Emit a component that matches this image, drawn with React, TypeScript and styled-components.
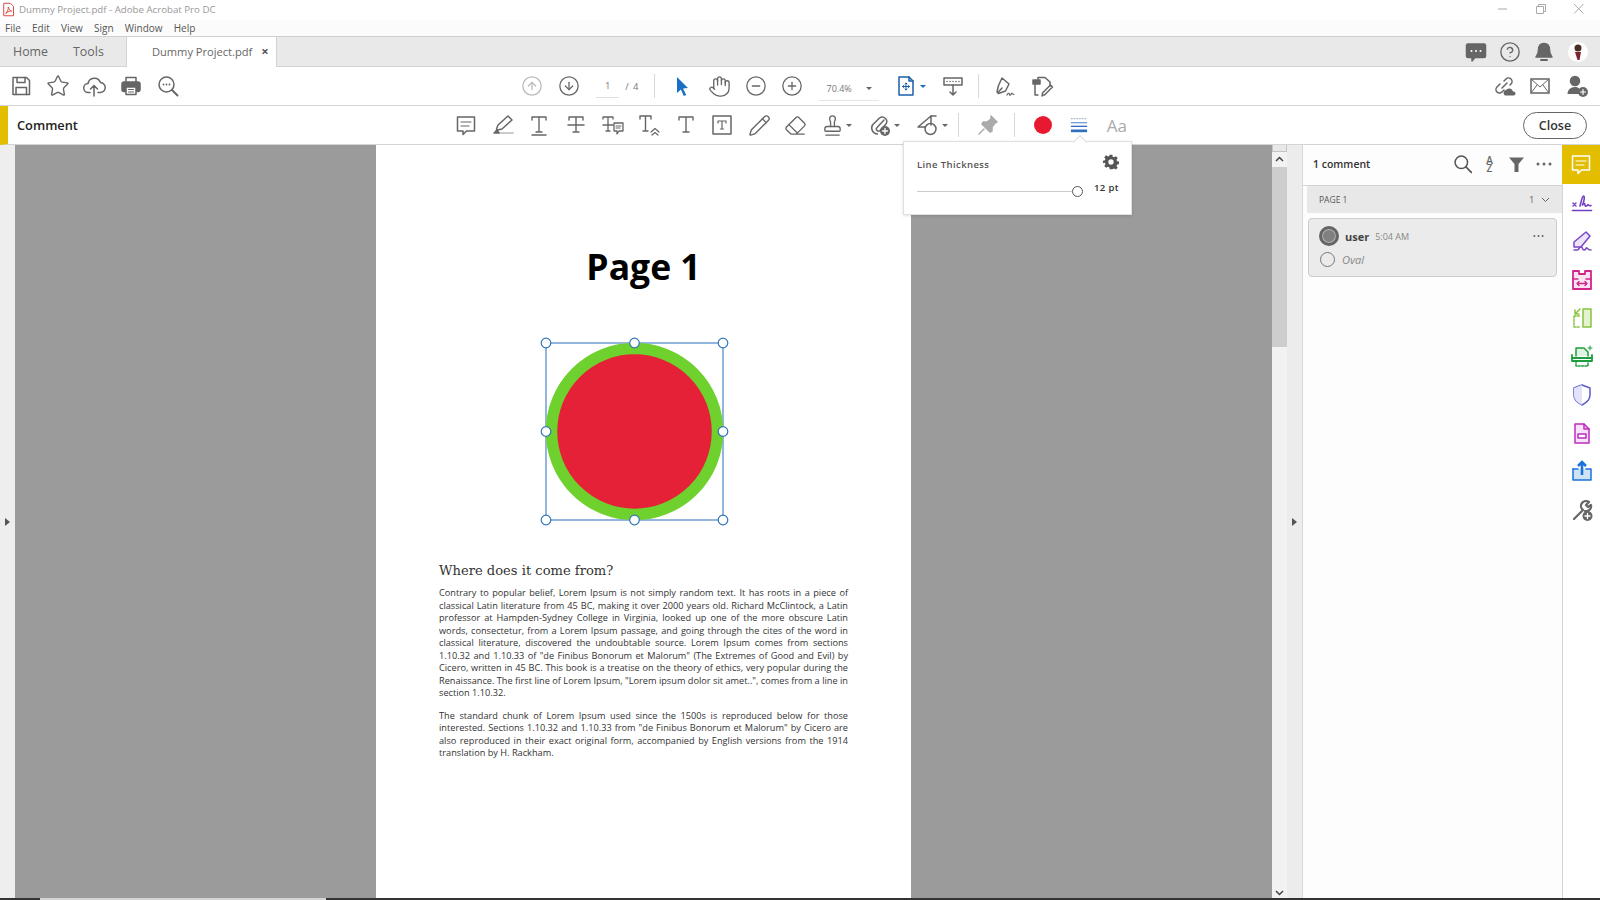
import React from 'react';
import styled, { createGlobalStyle } from 'styled-components';
import {
  CircleArrowDown,
  CircleArrowUp,
  CircleHelp,
  CircleMinus,
  CirclePlus,
  Eraser,
  Hand,
  Pencil,
  Star,
  Stamp,
} from 'lucide-react';

const GlobalStyle = createGlobalStyle`
  html, body, #root {
    margin: 0;
    padding: 0;
    width: 100%;
    height: 100%;
    overflow: hidden;
  }
  body {
    font-family: "Open Sans", "Liberation Sans", sans-serif;
    background: #fff;
  }
`;

// App frame
const Frame = styled.div`
  width: 1600px;
  height: 900px;
  display: flex;
  flex-direction: column;
  position: relative;
  overflow: hidden;
`;

const TitleBar = styled.div`
  height: 20px;
  flex: none;
  display: flex;
  align-items: center;
  padding: 0 0 2px 1px;
  gap: 3px;
  box-sizing: border-box;
  background: #fff;
  font-size: 9.7px;
  color: #999;
`;

const TitleText = styled.span`
  flex: 1;
`;

const WindowControls = styled.div`
  display: flex;
  align-items: center;
  margin-right: 15px;
  gap: 26px;
  color: #aaa;
`;

const MenuBar = styled.div`
  height: 16px;
  flex: none;
  display: flex;
  align-items: center;
  padding-left: 5px;
  gap: 11.2px;
  background: #fbfbfb;
  font-size: 10px;
  color: #555;
`;

const TabBar = styled.div`
  height: 31px;
  flex: none;
  display: flex;
  background: #e9e9e9;
  border-top: 1px solid #cfcfcf;
  border-bottom: 1px solid #d4d4d4;
  box-sizing: border-box;
  color: #666;
`;

const HomeTabs = styled.div`
  width: 127px;
  display: flex;
  align-items: center;
  padding-left: 13px;
  gap: 25px;
  box-sizing: border-box;
  font-size: 12.4px;
  border-right: 1px solid #d4d4d4;
`;

const DocTab = styled.div`
  width: 150px;
  height: 30px;
  display: flex;
  align-items: center;
  padding: 0 0 2px 25px;
  gap: 9px;
  box-sizing: border-box;
  background: #fff;
  font-size: 11.1px;
  white-space: nowrap;
  border-right: 1px solid #d4d4d4;
`;

const TabClose = styled.span`
  font-size: 13px;
  font-weight: 700;
  color: #555;
`;

const TabActions = styled.div`
  margin-left: auto;
  padding-right: 12px;
  display: flex;
  align-items: center;
  gap: 10px;
  color: #666;
`;

const Avatar = styled.div`
  width: 20px;
  height: 20px;
  border-radius: 50%;
  background: #fff;
  display: flex;
  align-items: center;
  justify-content: center;
  margin-left: 2px;
`;

const Toolbar = styled.div`
  height: 38px;
  flex: none;
  display: flex;
  align-items: center;
  padding-left: 3px;
  border-bottom: 1px solid #d4d4d4;
  background: #fff;
  color: #666;
`;

const Slot = styled.div<{ $w?: number; $ml?: number }>`
  width: ${p => p.$w ?? 36.6}px;
  margin-left: ${p => p.$ml ?? 0}px;
  flex: none;
  display: flex;
  align-items: center;
  justify-content: center;
`;

const PageBox = styled.div`
  width: 67px;
  display: flex;
  align-items: center;
  font-size: 9.5px;
  color: #777;
`;

const PageInput = styled.span`
  width: 23px;
  margin: 5px 6px 0 9px;
  padding-bottom: 5px;
  text-align: center;
  border-bottom: 1px solid #e0e0e0;
`;

const PageTotal = styled.span`
  word-spacing: 2px;
`;

const Divider = styled.div<{ $ml?: number; $mr?: number }>`
  width: 1px;
  height: 24px;
  flex: none;
  background: #d8d8d8;
  margin-left: ${p => p.$ml ?? 0}px;
  margin-right: ${p => p.$mr ?? 0}px;
`;

const ZoomBox = styled.div`
  width: 60px;
  margin: 5px 0 0 8px;
  padding: 5px 7px 5px 8px;
  display: flex;
  align-items: center;
  justify-content: space-between;
  box-sizing: border-box;
  font-size: 9px;
  color: #777;
  border-bottom: 1px solid #e6e6e6;
`;

const Caret = styled.i<{ $color?: string }>`
  width: 0;
  height: 0;
  flex: none;
  border-left: 3px solid transparent;
  border-right: 3px solid transparent;
  border-top: 3.5px solid ${p => p.$color ?? '#666'};
  margin-left: 2px;
`;

const RightTools = styled.div`
  margin-left: auto;
  margin-right: 5px;
  display: flex;
  align-items: center;
`;

const CommentBar = styled.div`
  height: 39px;
  flex: none;
  display: flex;
  align-items: center;
  box-sizing: border-box;
  border-left: 8px solid #e3bd00;
  border-bottom: 1px solid #d4d4d4;
  color: #666;
`;

const CommentLabel = styled.div`
  width: 440px;
  flex: none;
  padding-left: 9px;
  box-sizing: border-box;
  font-size: 12.8px;
  font-weight: 600;
  color: #222;
`;

const Swatch = styled.div`
  width: 18px;
  height: 18px;
  border-radius: 50%;
  background: #e8192f;
`;

const FontGlyph = styled.span`
  font-size: 17px;
  color: #aaa;
`;

const CloseButton = styled.button`
  margin-left: auto;
  margin-right: 13px;
  width: 64px;
  height: 27px;
  border: 1px solid #666;
  border-radius: 14px;
  background: #fff;
  font-family: inherit;
  font-size: 12.5px;
  font-weight: 600;
  color: #333;
`;

// Document area
const Main = styled.div`
  flex: 1;
  min-height: 0;
  display: flex;
`;

const Strip = styled.div<{ $w: number; $bg: string }>`
  width: ${p => p.$w}px;
  flex: none;
  background: ${p => p.$bg};
  display: flex;
  align-items: center;
  justify-content: center;
  box-sizing: border-box;
`;

const Arrow = styled.i`
  width: 0;
  height: 0;
  border-top: 4px solid transparent;
  border-bottom: 4px solid transparent;
  border-left: 5px solid #555;
`;

const Viewer = styled.div`
  width: 1257px;
  flex: none;
  background: #9b9b9b;
  padding-left: 361px;
  box-sizing: border-box;
  overflow: hidden;
`;

const PageSheet = styled.div`
  width: 535px;
  height: 100%;
  background: #fff;
  box-sizing: border-box;
  padding: 98px 63px 0;
`;

const PageTitle = styled.h1`
  margin: 0;
  text-align: center;
  font-size: 35.5px;
  line-height: 46px;
  font-weight: 700;
  color: #000;
`;

const Shape = styled.svg`
  display: block;
  overflow: visible;
  margin: 54px 0 0 107px;
`;

const Heading = styled.h2`
  margin: 41px 0 6px;
  font-family: "DejaVu Serif", "Liberation Serif", serif;
  font-size: 13.1px;
  line-height: 20px;
  font-weight: 400;
  color: #333;
`;

const Para = styled.div`
  margin-bottom: 10px;
  font-size: 9.2px;
  line-height: 12.5px;
  color: #333;
`;

const ParaLine = styled.div<{ $last?: boolean }>`
  text-align: justify;
  text-align-last: ${p => (p.$last ? 'left' : 'justify')};
  white-space: nowrap;
`;

const Scrollbar = styled.div`
  width: 15px;
  flex: none;
  background: #f2f2f2;
  display: flex;
  flex-direction: column;
  align-items: center;
`;

const ScrollCap = styled.div`
  width: 100%;
  height: 7px;
  flex: none;
  box-sizing: border-box;
  background: #e8e8e8;
  border: 1px solid #c4c4c4;
  border-top: 0;
`;

const ScrollArrow = styled.span<{ $h: number }>`
  height: ${p => p.$h}px;
  flex: none;
  display: flex;
  align-items: center;
  color: #555;
`;

const ScrollThumbGap = styled.div`
  height: 2px;
  flex: none;
`;

const ScrollThumb = styled.div`
  width: 100%;
  height: 180px;
  flex: none;
  background: #cdcdcd;
`;

const ScrollSpacer = styled.div`
  flex: 1;
`;

const Panel = styled.div`
  width: 260px;
  flex: none;
  border-left: 1px solid #d8d8d8;
  box-sizing: border-box;
  background: #fdfdfd;
`;

const PanelHeader = styled.div`
  height: 41px;
  display: flex;
  align-items: center;
  padding: 0 5px 2px 10px;
  box-sizing: border-box;
  border-bottom: 1px solid #d4d4d4;
  color: #555;
`;

const PanelTitle = styled.div`
  flex: 1;
  font-size: 10.5px;
  font-weight: 600;
  color: #333;
`;

const PanelTool = styled.div`
  width: 27px;
  display: flex;
  align-items: center;
  justify-content: center;
`;

const AzGlyph = styled.div`
  width: 8px;
  text-align: center;
  font-size: 10px;
  line-height: 8.500px;
  font-weight: 600;
  color: #666;
`;

const PageGroup = styled.div`
  height: 27px;
  margin-left: 4px;
  padding: 0 12px 0 12px;
  display: flex;
  align-items: center;
  justify-content: space-between;
  background: #e8e8e8;
  font-size: 8.5px;
  color: #555;
`;

const PageCount = styled.div`
  display: flex;
  align-items: center;
  gap: 7px;
`;

const CommentCard = styled.div`
  margin: 5px 5px 0 5px;
  height: 59px;
  padding: 5px 12px 0 10px;
  box-sizing: border-box;
  background: #ebebeb;
  border: 1px solid #ccc;
  border-radius: 4px;
`;

const CardRow = styled.div<{ $h: number }>`
  height: ${p => p.$h}px;
  display: flex;
  align-items: center;
  gap: 6px;
`;

const AuthorDot = styled.div`
  width: 20px;
  height: 20px;
  flex: none;
  box-sizing: border-box;
  border-radius: 50%;
  border: 3.5px solid #666;
  background: #808080;
  box-shadow: inset 0 0 0 1px #b8b8b8;
`;

const Author = styled.span`
  font-size: 11px;
  font-weight: 700;
  color: #444;
`;

const CommentTime = styled.span`
  font-size: 9px;
  color: #888;
`;

const CardMore = styled.span`
  margin-left: auto;
  display: flex;
  color: #777;
`;

const TypeRing = styled.div`
  width: 15px;
  height: 15px;
  flex: none;
  box-sizing: border-box;
  margin: 0 1px;
  border-radius: 50%;
  border: 1.5px solid #777;
`;

const TypeLabel = styled.span`
  font-size: 11px;
  font-style: italic;
  color: #888;
`;

const Rail = styled.div`
  width: 38px;
  flex: none;
  border-left: 1px solid #d4d4d4;
  box-sizing: border-box;
  display: flex;
  flex-direction: column;
  align-items: center;
`;

const RailItem = styled.div<{ $active?: boolean }>`
  width: 38px;
  height: ${p => (p.$active ? 39 : 38.3)}px;
  flex: none;
  display: flex;
  align-items: center;
  justify-content: center;
  box-sizing: border-box;
  padding-bottom: ${p => (p.$active ? 2 : 0)}px;
  background: ${p => (p.$active ? '#e3bd00' : 'transparent')};
  margin-left: ${p => (p.$active ? -1 : 0)}px;
`;

const BottomEdge = styled.div`
  height: 2px;
  flex: none;
  display: flex;
  background: #333;
`;

const EdgeGap = styled.div`
  width: 286px;
  margin-left: 40px;
  background: #d4d4d4;
`;

// Line thickness popup
const Popup = styled.div`
  position: absolute;
  left: 903px;
  top: 141px;
  width: 229px;
  height: 74px;
  box-sizing: border-box;
  padding: 11px 12px 0 13px;
  background: #fff;
  border: 1px solid #e0e0e0;
  box-shadow: 0 1px 3px rgba(0, 0, 0, 0.12);
  font-size: 9.5px;
  font-weight: 600;
  color: #444;
  letter-spacing: 0.4px;

  &::before {
    content: '';
    position: absolute;
    left: 171px;
    top: -5px;
    width: 9px;
    height: 9px;
    background: #fff;
    border-top: 1px solid #ddd;
    border-left: 1px solid #ddd;
    transform: rotate(45deg);
  }
`;

const PopupHead = styled.div`
  display: flex;
  align-items: center;
  justify-content: space-between;
  height: 18px;
  color: #555;
`;

const PopupLabel = styled.span`
  margin-top: 4px;
`;

const SliderRow = styled.div`
  display: flex;
  align-items: center;
  margin-top: 9px;
`;

const SliderTrack = styled.div`
  width: 156px;
  height: 1px;
  background: #ccc;
  margin-top: 6px;
`;

const SliderKnob = styled.div`
  width: 11px;
  height: 11px;
  flex: none;
  box-sizing: border-box;
  margin-top: 6px;
  border: 1px solid #555;
  border-radius: 50%;
  background: #fff;
`;

const SliderValue = styled.span`
  margin-left: 11px;
  margin-top: -2px;
  white-space: nowrap;
  color: #333;
`;

// Drawn icons, all on a 24 grid
type GlyphProps = { size?: number; color?: string; children: React.ReactNode };

const Glyph: React.FC<GlyphProps> = ({ size = 24, color = 'currentColor', children }) => (
  <svg
    width={size}
    height={size}
    viewBox="0 0 24 24"
    fill="none"
    stroke={color}
    strokeWidth={1.5}
    strokeLinecap="round"
    strokeLinejoin="round"
  >
    {children}
  </svg>
);

const FileIcon = () => (
  <Glyph size={15} color="#d8413a">
    <path d="M5 2h10l5 5v15H5z" />
    <path d="M8 18c3-3 4-7 3.500-10 1.500 4 3 5.500 5.500 6.500-3-.5-6 1-9 3.500z" />
  </Glyph>
);

const WinMin = () => (
  <svg width="12" height="12" viewBox="0 0 12 12"><path d="M1 6h9" stroke="currentColor" /></svg>
);
const WinRestore = () => (
  <svg width="12" height="12" viewBox="0 0 12 12" fill="none" stroke="currentColor">
    <path d="M1.500 3.500h7v7h-7zM3.500 3.500v-2h7v7h-2" />
  </svg>
);
const WinClose = () => (
  <svg width="12" height="12" viewBox="0 0 12 12" stroke="currentColor"><path d="M1 1l9.500 9.500M10.500 1L1 10.500" /></svg>
);

const ChatDots = () => (
  <Glyph>
    <path d="M4 4h16a1.500 1.500 0 0 1 1.500 1.500V16a1.500 1.500 0 0 1-1.500 1.500h-9L8 21v-3.500H4A1.500 1.500 0 0 1 2.500 16V5.500A1.500 1.500 0 0 1 4 4z" fill="#666" />
    <path d="M7.500 11h.01M12 11h.01M16.500 11h.01" stroke="#fff" strokeWidth={2} />
  </Glyph>
);

const Bell = () => (
  <Glyph>
    <path d="M12 3.500c3.800 0 5.500 3 5.500 6.500 0 4 1.500 5.500 2.500 7H4c1-1.500 2.500-3 2.500-7 0-3.500 1.700-6.500 5.500-6.500z" fill="#666" />
    <path d="M9 20h6" strokeWidth={2} />
  </Glyph>
);

const Portrait = () => (
  <svg width="14" height="18" viewBox="0 0 14 18">
    <circle cx="7" cy="5" r="3.500" fill="#4a2c25" />
    <path d="M4 9l6 0-1.500 8-2 0z" fill="#7c2430" />
  </svg>
);

const SaveIcon = () => (
  <Glyph>
    <path d="M4 3.500h13.500L20.500 6.500V20.500H4z" />
    <path d="M8 3.500v5h8v-5M7 20.500v-7h10.500v7" />
  </Glyph>
);

const CloudUpload = () => (
  <Glyph>
    <path d="M8 18.500H6.500a4.500 4.500 0 0 1-.5-9 6.500 6.500 0 0 1 12.500-1 5 5 0 0 1-.5 10H16" />
    <path d="M12 22V11.500M8.500 15l3.500-3.500 3.500 3.500" />
  </Glyph>
);

const PrintIcon = () => (
  <Glyph>
    <path d="M7 8V3.500h10V8" />
    <rect x="3" y="8" width="18" height="9.500" rx="2" fill="#666" />
    <rect x="7" y="13" width="10" height="7.500" fill="#fff" />
    <path d="M9.500 15.500h5M9.500 18h5" strokeWidth={1} />
  </Glyph>
);

const FindIcon = () => (
  <Glyph>
    <circle cx="10.500" cy="10.500" r="7.500" />
    <path d="M16 16l5.500 5.500" strokeWidth={2} />
    <path d="M7.500 10.500h.01M10.500 10.500h.01M13.500 10.500h.01" strokeWidth={1.800} />
  </Glyph>
);

const Pointer = () => (
  <svg width="24" height="24" viewBox="0 0 24 24">
    <path d="M7 3l11 11-5 .5 3.200 6.500-2.400 1-2.900-6.500L7 19z" fill="#1a6fc4" />
  </svg>
);

const FitIcon = () => (
  <Glyph color="#1a5fa8">
    <path d="M5 3h10l4 4v14H5z" />
    <path d="M15 3v4h4" />
    <path d="M12 9v7M8.500 12.500h7M11 10l1-1 1 1M11 15l1 1 1-1M9.500 11.500l-1 1 1 1M14.500 11.500l1 1-1 1" strokeWidth={1} />
  </Glyph>
);

const ReadMode = () => (
  <Glyph>
    <rect x="3" y="4" width="18" height="7" />
    <path d="M6 7.500h.01M9 7.500h.01M12 7.500h.01M15 7.500h.01M18 7.500h.01" />
    <path d="M12 11v10M9 18l3 3 3-3" />
  </Glyph>
);

const SignPen = () => (
  <Glyph>
    <path d="M9 4l7 6-3.500 7-7 2.500L4 18l1.500-6.500z" />
    <path d="M5 18.500l4-4.500" />
    <path d="M14 21c1-2 2-2 2.500-.5s1.500 0 2-1 1 1 2.500 1" strokeWidth={1.200} />
  </Glyph>
);

const DocEdit = () => (
  <Glyph>
    <path d="M8 5V3.500h7L20 8v4M8 21H5V8" />
    <rect x="3" y="6" width="7" height="4" fill="#666" />
    <path d="M13 21l-1 1 .5-3 8-8 2 2-8 8z" />
  </Glyph>
);

const CloudLink = () => (
  <Glyph>
    <path d="M10 14l5-5M8 10l-3 3a3.500 3.500 0 0 0 5 5l2-2M12 7l2-2a3.500 3.500 0 0 1 5 5l-1 1" />
    <path d="M13 21.500a3 3 0 0 1 1-5.500 4 4 0 0 1 7 1.500 2 2 0 0 1 1 4z" fill="#666" stroke="none" />
  </Glyph>
);

const MailIcon = () => (
  <Glyph>
    <rect x="3" y="5" width="18" height="14" />
    <path d="M3 5l9 8 9-8M3 19l6-8M21 19l-6-8" strokeWidth={1} />
  </Glyph>
);

const UserAdd = () => (
  <Glyph>
    <circle cx="10" cy="7" r="4.500" fill="#666" />
    <path d="M2.500 20c0-4 3-7 7.500-7 1.500 0 3 .5 4 1.200V20z" fill="#666" stroke="none" />
    <circle cx="18" cy="18" r="5" fill="#666" stroke="none" />
    <path d="M18 15.500v5M15.500 18h5" stroke="#fff" strokeWidth={1.200} />
  </Glyph>
);

const CommentIcon: React.FC<{ color?: string }> = ({ color }) => (
  <Glyph color={color}>
    <path d="M3.500 4h17v14h-8L9 21.500V18H3.500z" />
    <path d="M7 9h10M7 13h8" strokeWidth={1.200} />
  </Glyph>
);

const Highlighter = () => (
  <Glyph>
    <path d="M17 3l4 4-10 9-4.500 1-1-1 1.500-4z" />
    <path d="M8 20h14" stroke="#ccc" strokeWidth={2} />
    <path d="M3 20l3-3 2 3z" fill="#666" />
  </Glyph>
);

const SerifT: React.FC<{ underline?: boolean; strike?: boolean }> = ({ underline, strike }) => (
  <Glyph>
    <path d="M5 7V4h14v3M12 4v15M9 19h6" strokeWidth={1.400} />
    {underline && <path d="M5 22h14" />}
    {strike && <path d="M4 12h16" />}
  </Glyph>
);

const TextComment = () => (
  <Glyph>
    <path d="M2 6V4h10v2M7 4v14M5 18h4M2 12h10" strokeWidth={1.300} />
    <path d="M13 10h9v8h-4l-2 3v-3h-3z" strokeWidth={1.300} />
    <path d="M15 13h5M15 15h4" strokeWidth={1} />
  </Glyph>
);

const TextCaret = () => (
  <Glyph>
    <path d="M3 6V3h11v3M8.500 3v15M6 18h5" strokeWidth={1.400} />
    <path d="M14 19l4-3.500 4 3.500M15 22l3-2.500 3 2.500" strokeWidth={1.200} />
  </Glyph>
);

const TextBox = () => (
  <Glyph>
    <rect x="3" y="3" width="18" height="18" />
    <path d="M8 10V8h8v2M12 8v8M10.500 16h3" strokeWidth={1.200} />
  </Glyph>
);

const ClipAdd = () => (
  <Glyph>
    <path d="M16 7l-7 7.500a2 2 0 0 0 3 3l6-6.500a4.500 4.500 0 0 0-6.500-6L4.500 12a6 6 0 0 0 5 9" />
    <circle cx="17" cy="18" r="5" fill="#666" stroke="none" />
    <path d="M17 15.500v5M14.500 18h5" stroke="#fff" strokeWidth={1.300} />
  </Glyph>
);

const ShapesIcon = () => (
  <Glyph>
    <path d="M15 3v9M15 3L2 14h7" />
    <path d="M15 3h5" />
    <circle cx="14.500" cy="16" r="5.500" />
  </Glyph>
);

const PinIcon = () => (
  <Glyph color="#aaa">
    <path d="M15 3l6 6-2 1-3 4 0 4-2 1-8-8 1-2 4 0 4-3z" fill="#aaa" />
    <path d="M8 16l-5 5" />
  </Glyph>
);

const LineWeight = () => (
  <svg width="20" height="18" viewBox="0 0 20 18">
    <path d="M1 2h18" stroke="#8a9fc0" strokeDasharray="2 1" />
    <path d="M1 6.500h18" stroke="#2f6fc0" />
    <path d="M1 10.500h18" stroke="#2f6fc0" strokeWidth="1.500" />
    <path d="M1 15.500h18" stroke="#2f6fc0" strokeWidth="3" />
  </svg>
);

const SearchIcon = () => (
  <Glyph size={20}>
    <circle cx="10" cy="10" r="7.500" strokeWidth={1.800} />
    <path d="M15.500 15.500L22 22" strokeWidth={2} />
  </Glyph>
);

const FilterIcon = () => (
  <svg width="17" height="17" viewBox="0 0 17 17">
    <path d="M1 1.500h15l-5.500 6.500v8h-4V8z" fill="#666" />
  </svg>
);

const Dots: React.FC<{ w?: number }> = ({ w = 16 }) => (
  <svg width={w} height="4" viewBox="0 0 16 4" fill="#666">
    <circle cx="2" cy="2" r="1.500" />
    <circle cx="8" cy="2" r="1.500" />
    <circle cx="14" cy="2" r="1.500" />
  </svg>
);

const Chevron = () => (
  <svg width="9" height="6" viewBox="0 0 9 6" fill="none" stroke="#666">
    <path d="M1 1l3.500 3.500L8 1" />
  </svg>
);

const Gear = () => (
  <svg width="16" height="16" viewBox="0 0 24 24">
    <path
      d="M10 1h4l.6 3.200 2 .8 2.700-1.800 2.800 2.800-1.800 2.700.8 2 3.200.6v4l-3.200.6-.8 2 1.800 2.700-2.800 2.800-2.700-1.800-2 .8L14 23h-4l-.6-3.200-2-.8-2.700 1.800-2.800-2.800 1.800-2.700-.8-2L-.3 14v-4l3.200-.6.8-2L1.900 4.700l2.800-2.800 2.700 1.800 2-.8z"
      fill="#555"
    />
    <circle cx="12" cy="12" r="4" fill="#fff" />
  </svg>
);

// Tools rail
const RailComment = () => <CommentIcon color="#fff" />;

const RailSign = () => (
  <Glyph color="#6f3fc4">
    <path d="M3 12l3 3M6 12l-3 3" strokeWidth={1.400} />
    <path d="M10 15c1-3 2-10 3.500-10 1.500 0 .5 6-1 9 1.500-2 2.500-2 2.500 0s2.500 1 3-.5c.5 1 1.500 1.500 3 1" strokeWidth={1.600} />
    <path d="M2.500 19.500h19" strokeWidth={1.600} />
  </Glyph>
);

const RailEdit = () => (
  <Glyph color="#7a45c8">
    <path d="M16 3l4 4-9 11H4v-5z" fill="#ece4f8" />
    <path d="M4 21h3c2 0 2-3 4-3s1 3 3 3 2-3 3-2 1 2 4 2" />
  </Glyph>
);

const RailOrganize = () => (
  <Glyph color="#d0268a">
    <path d="M3 3h6v3h6V3h6v18H3z" fill="#fbe4f1" strokeWidth={1.800} />
    <path d="M3 11h5M16 11h5M7 15.500h10M7 15.500l2-2M7 15.500l2 2M17 15.500l-2-2M17 15.500l-2 2" strokeWidth={1.300} />
  </Glyph>
);

const RailCompare = () => (
  <Glyph color="#86c440">
    <rect x="13" y="3" width="8" height="18" fill="#e3f3cf" />
    <path d="M4 10v11h6M4 10h6" strokeDasharray="2 1.500" />
    <path d="M10 3L5 8M5 4v4h4" />
  </Glyph>
);

const RailScan = () => (
  <Glyph color="#1f9e3e">
    <path d="M6 12V4h8l4 4v4" fill="#dff3e3" />
    <path d="M2 11v6h20v-6M2 14h20" strokeWidth={1.800} />
    <path d="M6 17v5h12v-5" strokeDasharray="2 1.500" />
    <path d="M20 2v4M18 4h4" strokeWidth={1} />
  </Glyph>
);

const RailProtect = () => (
  <Glyph color="#5a5acb">
    <path d="M12 2l8 3v7c0 5-4 8-8 10-4-2-8-5-8-10V5z" />
    <path d="M12 2v20c-4-2-8-5-8-10V5z" fill="#e2e2f8" stroke="none" />
  </Glyph>
);

const RailOptimize = () => (
  <Glyph color="#c02ac0">
    <path d="M5 3h9l5 5v14H5z" fill="#f8e4f8" />
    <path d="M14 3v5h5" />
    <rect x="8" y="13" width="8" height="4" fill="#fff" />
  </Glyph>
);

const RailShare = () => (
  <Glyph color="#1a73d8">
    <path d="M3 10v11h18V10h-5" fill="#cfe3f8" />
    <path d="M3 10h5" />
    <path d="M12 16V3M8 7l4-4 4 4" strokeWidth={2.600} strokeLinecap="butt" strokeLinejoin="miter" />
  </Glyph>
);

const RailMore = () => (
  <Glyph color="#666">
    <path d="M4 21l9-9a5 5 0 0 1 6-8l-3 3 2 2 3-2a5 5 0 0 1-6 6" strokeWidth={2.200} />
    <circle cx="17.500" cy="18" r="5" fill="#666" stroke="none" />
    <path d="M17.500 15.500v5M15 18h5" stroke="#fff" strokeWidth={1.300} />
  </Glyph>
);

// Selected oval annotation
const handles = [0, 88.5, 177].flatMap(y =>
  [0, 88.5, 177].filter(x => !(x === 88.5 && y === 88.5)).map(x => ({ x, y }))
);

const OvalAnnotation = () => (
  <Shape width={177} height={177} viewBox="0 0 177 177">
    <rect x="0" y="0" width="177" height="177" fill="none" stroke="#4a86c8" strokeWidth="1.200" />
    <circle cx="88.500" cy="88.500" r="83" fill="#e42137" stroke="#6fd12e" strokeWidth="11.500" />
    {handles.map(h => (
      <circle key={`${h.x}-${h.y}`} cx={h.x} cy={h.y} r="4.800" fill="#fff" stroke="#2f75b8" strokeWidth="1.200" />
    ))}
  </Shape>
);

const bodyOne = [
  'Contrary to popular belief, Lorem Ipsum is not simply random text. It has roots in a piece of',
  'classical Latin literature from 45 BC, making it over 2000 years old. Richard McClintock, a Latin',
  'professor at Hampden-Sydney College in Virginia, looked up one of the more obscure Latin',
  'words, consectetur, from a Lorem Ipsum passage, and going through the cites of the word in',
  'classical literature, discovered the undoubtable source. Lorem Ipsum comes from sections',
  '1.10.32 and 1.10.33 of "de Finibus Bonorum et Malorum" (The Extremes of Good and Evil) by',
  'Cicero, written in 45 BC. This book is a treatise on the theory of ethics, very popular during the',
  'Renaissance. The first line of Lorem Ipsum, "Lorem ipsum dolor sit amet..", comes from a line in',
  'section 1.10.32.',
];

const bodyTwo = [
  'The standard chunk of Lorem Ipsum used since the 1500s is reproduced below for those',
  'interested. Sections 1.10.32 and 1.10.33 from "de Finibus Bonorum et Malorum" by Cicero are',
  'also reproduced in their exact original form, accompanied by English versions from the 1914',
  'translation by H. Rackham.',
];

const Paragraph: React.FC<{ lines: string[] }> = ({ lines }) => (
  <Para>
    {lines.map((line, i) => (
      <ParaLine key={line} $last={i === lines.length - 1}>{line}</ParaLine>
    ))}
  </Para>
);

const App: React.FC = () => {
  const railIcons = [RailSign, RailEdit, RailOrganize, RailCompare, RailScan, RailProtect, RailOptimize, RailShare, RailMore];

  return (
    <Frame>
      <GlobalStyle />

      <TitleBar>
        <FileIcon />
        <TitleText>Dummy Project.pdf - Adobe Acrobat Pro DC</TitleText>
        <WindowControls>
          <WinMin />
          <WinRestore />
          <WinClose />
        </WindowControls>
      </TitleBar>

      <MenuBar>
        <span>File</span>
        <span>Edit</span>
        <span>View</span>
        <span>Sign</span>
        <span>Window</span>
        <span>Help</span>
      </MenuBar>

      <TabBar>
        <HomeTabs>
          <span>Home</span>
          <span>Tools</span>
        </HomeTabs>
        <DocTab>
          <span>Dummy Project.pdf</span>
          <TabClose>×</TabClose>
        </DocTab>
        <TabActions>
          <ChatDots />
          <Slot $w={24}><CircleHelp size={22} strokeWidth={1.5} /></Slot>
          <Bell />
          <Avatar><Portrait /></Avatar>
        </TabActions>
      </TabBar>

      <Toolbar>
        <Slot><SaveIcon /></Slot>
        <Slot><Star size={24} strokeWidth={1.4} /></Slot>
        <Slot><CloudUpload /></Slot>
        <Slot><PrintIcon /></Slot>
        <Slot><FindIcon /></Slot>
        <Slot $ml={328}><CircleArrowUp size={22} strokeWidth={1.4} color="#bbb" /></Slot>
        <Slot><CircleArrowDown size={22} strokeWidth={1.4} /></Slot>
        <PageBox>
          <PageInput>1</PageInput>
          <PageTotal>/ 4</PageTotal>
        </PageBox>
        <Divider $mr={9} />
        <Slot><Pointer /></Slot>
        <Slot><Hand size={23} strokeWidth={1.4} /></Slot>
        <Slot><CircleMinus size={22} strokeWidth={1.4} /></Slot>
        <Slot><CirclePlus size={22} strokeWidth={1.4} /></Slot>
        <ZoomBox>
          <span>70.4%</span>
          <Caret />
        </ZoomBox>
        <Slot $ml={13} $w={36}>
          <FitIcon />
          <Caret $color="#1a6fc4" />
        </Slot>
        <Slot $ml={7}><ReadMode /></Slot>
        <Divider $ml={7} $mr={8} />
        <Slot><SignPen /></Slot>
        <Slot><DocEdit /></Slot>
        <RightTools>
          <Slot><CloudLink /></Slot>
          <Slot><MailIcon /></Slot>
          <Slot><UserAdd /></Slot>
        </RightTools>
      </Toolbar>

      <CommentBar>
        <CommentLabel>Comment</CommentLabel>
        <Slot><CommentIcon /></Slot>
        <Slot><Highlighter /></Slot>
        <Slot><SerifT underline /></Slot>
        <Slot><SerifT strike /></Slot>
        <Slot><TextComment /></Slot>
        <Slot><TextCaret /></Slot>
        <Slot><SerifT /></Slot>
        <Slot><TextBox /></Slot>
        <Slot><Pencil size={23} strokeWidth={1.4} /></Slot>
        <Slot><Eraser size={23} strokeWidth={1.4} /></Slot>
        <Slot $w={40} $ml={3}><Stamp size={23} strokeWidth={1.4} /><Caret /></Slot>
        <Slot $w={46} $ml={4}><ClipAdd /><Caret /></Slot>
        <Slot $w={46} $ml={2}><ShapesIcon /><Caret /></Slot>
        <Divider $ml={3} />
        <Slot $w={52} $ml={3}><PinIcon /></Slot>
        <Divider />
        <Slot $w={54} $ml={1}><Swatch /></Slot>
        <Slot $w={18}><LineWeight /></Slot>
        <Slot $w={58}><FontGlyph>Aa</FontGlyph></Slot>
        <CloseButton>Close</CloseButton>
      </CommentBar>

      <Main>
        <Strip $w={15} $bg="#eeeeee"><Arrow /></Strip>
        <Viewer>
          <PageSheet>
            <PageTitle>Page 1</PageTitle>
            <OvalAnnotation />
            <Heading>Where does it come from?</Heading>
            <Paragraph lines={bodyOne} />
            <Paragraph lines={bodyTwo} />
          </PageSheet>
        </Viewer>
        <Scrollbar>
          <ScrollCap />
          <ScrollArrow $h={13}>
            <svg width="9" height="6" viewBox="0 0 9 6" fill="none" stroke="#444" strokeWidth="1.500"><path d="M1 5l3.500-3.500L8 5" /></svg>
          </ScrollArrow>
          <ScrollThumbGap />
          <ScrollThumb />
          <ScrollSpacer />
          <ScrollArrow $h={11}>
            <svg width="9" height="6" viewBox="0 0 9 6" fill="none" stroke="#444" strokeWidth="1.500"><path d="M1 1l3.500 3.500L8 1" /></svg>
          </ScrollArrow>
        </Scrollbar>
        <Strip $w={15} $bg="#ececec"><Arrow /></Strip>
        <Panel>
          <PanelHeader>
            <PanelTitle>1 comment</PanelTitle>
            <PanelTool><SearchIcon /></PanelTool>
            <PanelTool><AzGlyph>A Z</AzGlyph></PanelTool>
            <PanelTool><FilterIcon /></PanelTool>
            <PanelTool><Dots /></PanelTool>
          </PanelHeader>
          <PageGroup>
            <span>PAGE 1</span>
            <PageCount>
              <span>1</span>
              <Chevron />
            </PageCount>
          </PageGroup>
          <CommentCard>
            <CardRow $h={24}>
              <AuthorDot />
              <Author>user</Author>
              <CommentTime>5:04 AM</CommentTime>
              <CardMore><Dots w={11} /></CardMore>
            </CardRow>
            <CardRow $h={23}>
              <TypeRing />
              <TypeLabel>Oval</TypeLabel>
            </CardRow>
          </CommentCard>
        </Panel>
        <Rail>
          <RailItem $active><RailComment /></RailItem>
          {railIcons.map((Icon, i) => (
            <RailItem key={i}><Icon /></RailItem>
          ))}
        </Rail>
      </Main>

      <BottomEdge>
        <EdgeGap />
      </BottomEdge>

      <Popup>
        <PopupHead>
          <PopupLabel>Line Thickness</PopupLabel>
          <Gear />
        </PopupHead>
        <SliderRow>
          <SliderTrack />
          <SliderKnob />
          <SliderValue>12 pt</SliderValue>
        </SliderRow>
      </Popup>
    </Frame>
  );
};

export default App;
